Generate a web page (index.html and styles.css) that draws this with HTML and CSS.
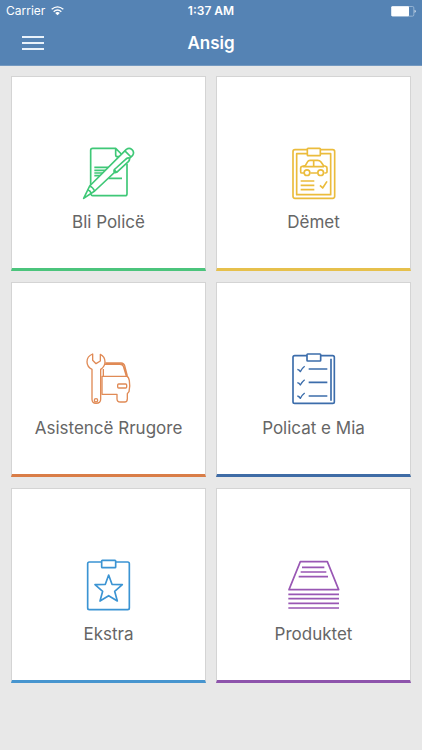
FILE: index.html
```html
<!DOCTYPE html>
<html lang="sq">
<head>
<meta charset="utf-8">
<meta name="viewport" content="width=device-width, initial-scale=1">
<title>Ansig</title>
<link rel="stylesheet" href="styles.css">
</head>
<body>
<header class="header">
  <div class="status">
    <div class="carrier">
      <span>Carrier</span>
      <svg class="wifi" viewBox="0 0 39 30" aria-hidden="true"><path d="M2 10Q19.500-5 37 10" stroke-width="4"/><path d="M8 17Q19.500 7 31 17" stroke-width="4"/><path class="solid" d="M12.500 21Q19.500 15 26.500 21L19.500 28Z"/></svg>
    </div>
    <time class="time">1:37 AM</time>
    <div class="power">
      <svg class="battery" viewBox="0 0 75 33" aria-hidden="true"><rect x="1.500" y="1.500" width="67" height="29" rx="4"/><rect class="solid" x="1" y="1" width="53" height="30" rx="3"/><path class="solid" d="M71 11q6 5 0 10z"/></svg>
    </div>
  </div>
  <nav class="navbar">
    <button class="menu" type="button" aria-label="Menu"><span class="bar"></span><span class="bar"></span><span class="bar"></span></button>
    <h1 class="title">Ansig</h1>
  </nav>
</header>
<main class="grid">
  <a class="card green" href="#police">
    <svg class="icon" viewBox="56 24 180 180" aria-hidden="true">
      <path d="M91 150V46q0-6 6-6h69l17 17M200 86v90q0 6-6 6H97q-5 0-6-8M166 40v19q0 6 6 6h5M102 97h42M102 106h34M102 114h26M102 122h18M144 130h41"/>
      <path class="pen" d="M70 190l18-37L198 43q9-6 17 1 8 8 2 17L103 168z"/>
      <path d="M88 153q9 3 15 15M82 164q8 3 11 11M193 47l19 19"/>
      <path class="pen" d="M206 69q4 5-2 11l-35 32q-6 2-8-3-1-4 3-7l31-28q6-7 11-5zM160 103l9 9"/>
    </svg>
    <span class="label">Bli Policë</span>
  </a>
  <a class="card yellow" href="#demet">
    <svg class="icon" viewBox="60 24 180 180" aria-hidden="true">
      <path d="M130 44H93q-6 0-6 6v134q0 6 6 6h113q6 0 6-6V50q0-6-6-6h-37M130 56H98v123h102V56h-31"/>
      <rect x="130" y="40" width="39" height="22" rx="2"/>
      <path d="M120 114h-7q-3 0-3-4V99q0-4 5-5l9-2 7-12q2-4 7-4h23q6 0 10 5l8 11 6 2q4 1 4 5v12q0 3-4 3h-4M139 114h21M117 95h63M149 77v17"/>
      <circle cx="129" cy="113" r="8.500"/><circle cx="170" cy="113" r="8.500"/>
      <path d="M110 138h41M110 151h41M110 164h41M168 151l8 8 13-20"/>
    </svg>
    <span class="label">Dëmet</span>
  </a>
  <a class="card orange" href="#asistence">
    <svg class="icon thin" viewBox="56 22 180 180" aria-hidden="true">
      <path d="M97 37v19l10 10 13-8V38q14 7 14 23 0 14-13 22v90q0 12-14 12-12 0-12-12V83q-15-8-15-23 0-16 17-23z"/>
      <circle cx="107" cy="176" r="5"/>
      <path d="M134 68h45q8 0 10 6l9 29M135 64h47q9 1 11 8l8 31M125 104h75q5 2 7 13 3 16-1 33l-5 6v15q0 10-8 10h-13q-10 0-10-9v-14h-45zM129 82v21"/>
      <rect x="172" y="127" width="27" height="12" rx="3"/>
    </svg>
    <span class="label">Asistencë Rrugore</span>
  </a>
  <a class="card navy" href="#policat">
    <svg class="icon" viewBox="60 22 180 180" aria-hidden="true">
      <path d="M129 42H92q-5 0-5 5v133q0 5 5 5h114q5 0 5-5V47q0-5-5-5h-36"/>
      <rect x="129" y="37" width="41" height="21" rx="2"/>
      <path d="M201 51v126M134 82h56M134 122h56M134 163h56"/>
      <path class="fine" d="M100 83q6 1 9 7 5-10 13-16M100 123q6 1 9 7 5-10 13-16M100 163q6 1 9 7 5-10 13-16"/>
    </svg>
    <span class="label">Policat e Mia</span>
  </a>
  <a class="card blue" href="#ekstra">
    <svg class="icon" viewBox="56 20 180 180" aria-hidden="true">
      <path d="M124 41H87q-5 0-5 5v133q0 5 5 5h115q5 0 5-5V46q0-5-5-5h-36"/>
      <rect x="124" y="36" width="42" height="22" rx="2"/>
      <path d="M145 80l10 28 31 1-23 20 8 29-26-16-26 16 8-29-23-20 31-1z"/>
    </svg>
    <span class="label">Ekstra</span>
  </a>
  <a class="card purple" href="#produktet">
    <svg class="icon" viewBox="60 20 180 180" aria-hidden="true">
      <path d="M109 40h81l34 84H75zM114 57h67M110 71h77M104 85h88"/>
      <path class="heavy" d="M73 138h152M73 151h152M73 165h152M73 179h152"/>
    </svg>
    <span class="label">Produktet</span>
  </a>
</main>
</body>
</html>
```
FILE: styles.css
```css
* {
  box-sizing: border-box;
}

body {
  margin: 0;
  min-height: 100vh;
  background: #e8e8e8;
  color: #666;
  font-family: Inter, "Liberation Sans", sans-serif;
}

.header {
  background: #5583b4;
  color: #fff;
}

.status {
  display: grid;
  grid-template-columns: 1fr auto 1fr;
  align-items: center;
  height: 22px;
  padding: 0 6px;
  font-size: 12px;
  line-height: 22px;
}

.carrier {
  display: flex;
  align-items: center;
  gap: 6px;
}

.time {
  font-weight: 600;
}

.power {
  display: flex;
  justify-content: flex-end;
}

.wifi {
  width: 13px;
  height: 10px;
  fill: none;
  stroke: #fff;
}

.battery {
  width: 25px;
  height: 11px;
  fill: none;
  stroke: #b5cbe2;
  stroke-width: 2;
}

.solid {
  fill: #fff;
  stroke: none;
}

.navbar {
  display: grid;
  grid-template-columns: 1fr auto 1fr;
  align-items: center;
  height: 44px;
  padding: 0 22px 2px;
  border-bottom: 1px solid #7499c0;
}

.menu {
  display: flex;
  flex-direction: column;
  gap: 4px;
  width: 22px;
  padding: 0;
  border: 0;
  background: none;
}

.bar {
  width: 100%;
  height: 2px;
  background: #e9f2fb;
}

.title {
  margin: 0;
  font-size: 17px;
  font-weight: 600;
  line-height: 22px;
}

.grid {
  display: grid;
  grid-template-columns: 1fr 1fr;
  gap: 11px 10px;
  padding: 10px 11px;
}

.card {
  display: flex;
  flex-direction: column;
  align-items: center;
  justify-content: center;
  gap: 7px;
  aspect-ratio: 1;
  padding-top: 36px;
  padding-bottom: 4px;
  border: 1px solid #d4d4d4;
  border-bottom: 3px solid;
  background: #fff;
  color: #666;
  text-decoration: none;
}

.icon {
  width: 60px;
  height: 60px;
  fill: none;
  stroke-width: 5;
  stroke-linejoin: round;
}

.pen {
  fill: #fff;
}

.thin {
  stroke-width: 4;
}

.fine {
  stroke-width: 4;
}

.heavy {
  stroke-width: 5;
}

.label {
  font-size: 17px;
  line-height: 24px;
}

.green {
  border-bottom-color: #4bc47c;
  stroke: #3fc877;
}

.yellow {
  border-bottom-color: #e6c04c;
  stroke: #ebbc3c;
}

.orange {
  border-bottom-color: #d97d47;
  stroke: #e08a55;
}

.navy {
  border-bottom-color: #3f6ca6;
  stroke: #3c6dab;
}

.blue {
  border-bottom-color: #4795cf;
  stroke: #3b94d3;
}

.purple {
  border-bottom-color: #8e54ac;
  stroke: #9957b4;
}
```
